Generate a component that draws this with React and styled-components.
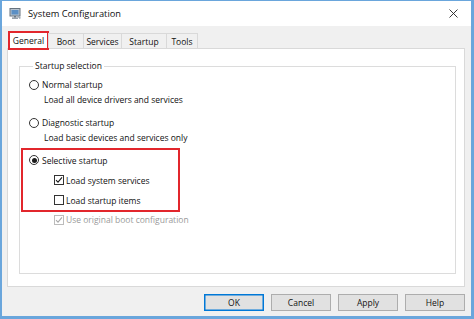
import React from "react";
import styled, { createGlobalStyle } from "styled-components";

const Global = createGlobalStyle`
  html, body { margin: 0; padding: 0; background: #ffffff; }
  body { font-family: "Open Sans", "Noto Sans", sans-serif; }
  * { box-sizing: border-box; }
`;

const Window = styled.div`
  width: 474px;
  height: 319px;
  display: flex;
  flex-direction: column;
  border-style: solid;
  border-color: #6aa6dc;
  border-width: 1px 3px 3px 2px;
  background: #f0f0f0;
  color: #111111;
`;

const TitleBar = styled.div`
  height: 25px;
  flex: none;
  background: #ffffff;
  display: flex;
  align-items: center;
  padding: 0 9px 0 7px;
`;

const Title = styled.div`
  font-size: 9.3px;
  margin-left: 6px;
  color: #111111;
  flex: 1;
`;

const Close = styled.div`
  width: 10px;
  height: 10px;
  margin-right: 4px;
  display: flex;
  align-items: center;
  justify-content: center;
`;

const Body = styled.div`
  flex: 1;
  display: flex;
  flex-direction: column;
  padding: 5px 6px 5px 5px;
`;

const TabStrip = styled.div`
  display: flex;
  align-items: flex-end;
  height: 17px;
  padding-left: 1px;
  position: relative;
  z-index: 1;
`;

const Tab = styled.div`
  font-size: 8.5px;
  display: flex;
  align-items: center;
  justify-content: center;
  width: ${(p) => p.$w}px;
  height: ${(p) => (p.$active ? 19 : 15)}px;
  margin-bottom: ${(p) => (p.$active ? -2 : 0)}px;
  padding-top: ${(p) => (p.$active ? 0 : 1)}px;
  background: ${(p) => (p.$active ? "#ffffff" : "#f0f0f0")};
  border: ${(p) => (p.$active ? "2px solid #e2262c" : "1px solid #d9d9d9")};
  border-bottom: ${(p) => (p.$active ? "2px solid #e2262c" : "none")};
  margin-left: ${(p) => (p.$first ? 0 : -1)}px;
  color: #111111;
`;

const TabPage = styled.div`
  flex: 1;
  background: #ffffff;
  border: 1px solid #d9d9d9;
  padding: 12px 8px 12px 11px;
  display: flex;
`;

const GroupBox = styled.fieldset`
  flex: 1;
  margin: 0;
  border: 1px solid #dcdcdc;
  padding: 6px 8px 0 9px;
  min-width: 0;
`;

const Legend = styled.legend`
  font-size: 8.5px;
  line-height: 10px;
  padding: 0 2px;
  margin-left: 4px;
  color: #111111;
`;

const Line = styled.div`
  display: flex;
  align-items: center;
  height: 15px;
  font-size: 8.5px;
  white-space: nowrap;
  padding-left: ${(p) => p.$indent || 0}px;
  margin-top: ${(p) => p.$gap || 0}px;
  color: ${(p) => (p.$disabled ? "#9a9a9a" : "#111111")};
`;

const Radio = styled.span`
  width: 10px;
  height: 10px;
  border-radius: 50%;
  border: 1px solid #333333;
  margin-right: 3px;
  flex: none;
  display: flex;
  align-items: center;
  justify-content: center;
  &::after {
    content: "";
    width: 5px;
    height: 5px;
    border-radius: 50%;
    background: ${(p) => (p.$checked ? "#1a1a1a" : "transparent")};
  }
`;

const Box = styled.span`
  width: 10px;
  height: 10px;
  border: 1px solid ${(p) => (p.$disabled ? "#bcbcbc" : "#333333")};
  margin-right: 2px;
  flex: none;
  display: flex;
  align-items: center;
  justify-content: center;
`;

const Highlight = styled.div`
  border: 2px solid #e2262c;
  margin: 3px 0 0 -8px;
  padding: 2.5px 0 2.5px 6px;
  width: 159px;
  display: flex;
  flex-direction: column;
  gap: 5px;
`;

const ButtonRow = styled.div`
  display: flex;
  justify-content: flex-end;
  gap: 7px;
  margin-top: 7px;
  height: 17px;
`;

const Button = styled.div`
  width: 60px;
  height: 17px;
  font-size: 8.5px;
  display: flex;
  align-items: center;
  justify-content: center;
  background: #e1e1e1;
  border: 1px solid ${(p) => (p.$default ? "#0078d7" : "#adadad")};
  box-shadow: ${(p) => (p.$default ? "inset 0 0 0 0.5px #0078d7" : "none")};
  color: #111111;
`;

const Check = ({ color }) => (
  <svg width="8" height="8" viewBox="0 0 8 8">
    <path d="M1 4.2 L3 6.2 L7 1.4" fill="none" stroke={color} strokeWidth="1.1" />
  </svg>
);

const AppIcon = () => (
  <svg width="13" height="13" viewBox="0 0 13 13">
    <rect x="1" y="1.5" width="10" height="7.5" fill="#b7c3cf" stroke="#66727e" strokeWidth="1" />
    <rect x="2.5" y="3" width="7" height="4.5" fill="#5b8fc4" />
    <rect x="5" y="9" width="2" height="1.5" fill="#6c7a88" />
    <rect x="3" y="10.5" width="6" height="1.2" fill="#6c7a88" />
    <path d="M9 8 L12 11 L10.5 12 L8 9 Z" fill="#9aa6b2" />
  </svg>
);

const tabs = [
  { label: "General", w: 41 },
  { label: "Boot", w: 36 },
  { label: "Services", w: 39 },
  { label: "Startup", w: 46 },
  { label: "Tools", w: 32 },
];

export default function App() {
  return (
    <>
      <Global />
      <Window>
        <TitleBar>
          <AppIcon />
          <Title>System Configuration</Title>
          <Close>
            <svg width="9" height="9" viewBox="0 0 9 9">
              <path d="M0.5 0.5 L8.5 8.5 M8.5 0.5 L0.5 8.5" stroke="#222" strokeWidth="0.9" />
            </svg>
          </Close>
        </TitleBar>
        <Body>
          <TabStrip>
            {tabs.map((t, i) => (
              <Tab key={t.label} $w={t.w} $active={i === 0} $first={i === 0}>
                {t.label}
              </Tab>
            ))}
          </TabStrip>
          <TabPage>
            <GroupBox>
              <Legend>Startup selection</Legend>
              <Line>
                <Radio />
                Normal startup
              </Line>
              <Line $indent={15}>Load all device drivers and services</Line>
              <Line $gap={8}>
                <Radio />
                Diagnostic startup
              </Line>
              <Line $indent={15}>Load basic devices and services only</Line>
              <Highlight>
                <Line>
                  <Radio $checked />
                  Selective startup
                </Line>
                <Line $indent={25}>
                  <Box>
                    <Check color="#1a1a1a" />
                  </Box>
                  Load system services
                </Line>
                <Line $indent={25}>
                  <Box />
                  Load startup items
                </Line>
              </Highlight>
              <Line $indent={25} $disabled>
                <Box $disabled>
                  <Check color="#a8a8a8" />
                </Box>
                Use original boot configuration
              </Line>
            </GroupBox>
          </TabPage>
          <ButtonRow>
            <Button $default>OK</Button>
            <Button>Cancel</Button>
            <Button>Apply</Button>
            <Button>Help</Button>
          </ButtonRow>
        </Body>
      </Window>
    </>
  );
}
